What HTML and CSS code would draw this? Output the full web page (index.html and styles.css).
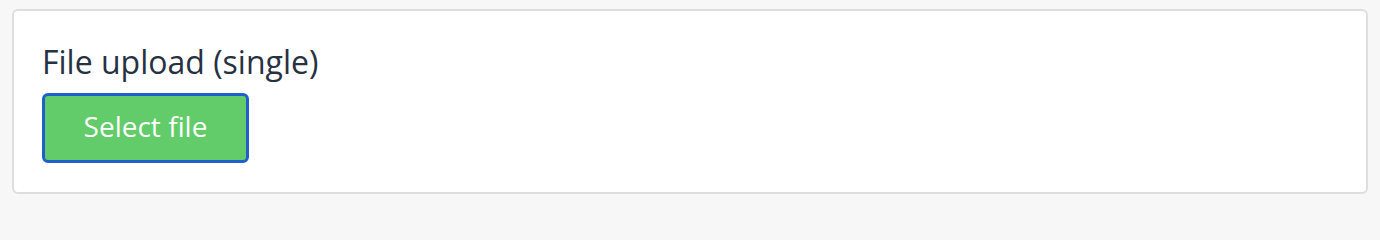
FILE: index.html
```html
<!DOCTYPE html>
<html>
<head>
<meta charset="utf-8">
<link rel="stylesheet" href="styles.css">
</head>
<body>
<div class="card">
  <label class="label">File upload (single)</label>
  <button class="btn">Select file</button>
</div>
</body>
</html>
```
FILE: styles.css
```css
html, body { margin: 0; padding: 0; }
body {
  background: #f7f7f7;
  font-family: "Open Sans", sans-serif;
  padding: 9px 12px 0 12px;
  width: 1380px;
  box-sizing: border-box;
}
.card {
  width: 1356px;
  height: 185px;
  box-sizing: border-box;
  background: #fff;
  border: 2px solid #dedede;
  border-radius: 6px;
  padding: 31px 0 0 28px;
  display: flex;
  flex-direction: column;
  align-items: flex-start;
  gap: 11px;
}
.label {
  font-size: 32px;
  line-height: 40px;
  color: #263142;
}
.btn {
  width: 207px;
  height: 70px;
  box-sizing: border-box;
  background: #62cb6a;
  border: 3px solid #1f5fcc;
  border-radius: 6px;
  color: #fff;
  font-family: "Open Sans", sans-serif;
  font-size: 28px;
  padding: 0 0 4px 0;
}
```
